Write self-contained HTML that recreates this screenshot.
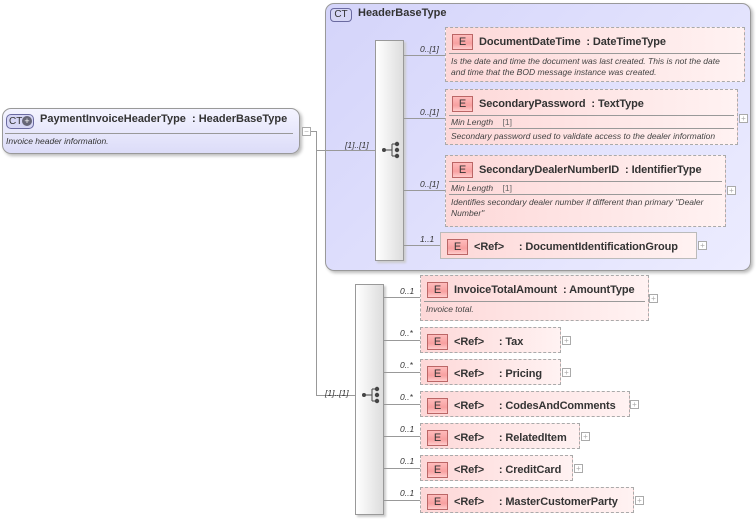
<!DOCTYPE html>
<html><head><meta charset="utf-8">
<style>
*{margin:0;padding:0;box-sizing:border-box}
body{width:756px;height:521px;background:#fff;position:relative;overflow:hidden;font-family:"Liberation Sans",Arial,sans-serif;color:#333}
.a{position:absolute}
.ln{position:absolute;background:#999}
.el{position:absolute;border:1px dashed #aaa;background:linear-gradient(to right,#fdd8d8,#fff2f2);}
.el.solid{border:1px solid #bbb}
.hd{position:absolute;left:6px;top:5px;height:17px;display:flex;align-items:center;font-weight:bold;font-size:11px;white-space:nowrap;letter-spacing:-0.1px}
.E{display:inline-block;width:21px;height:16px;border:1px solid #b66;background:linear-gradient(#fbb,#f7a0a0 60%,#fcc);font-weight:normal;font-size:11px;text-align:center;line-height:14px;margin-right:6px;color:#333}
.sep{position:absolute;left:3px;right:3px;height:1px;background:#999}
.doc{position:absolute;left:5px;font-style:italic;font-size:8.5px;line-height:11px;color:#444;white-space:nowrap}
.card{position:absolute;font-style:italic;font-size:8.5px;color:#333}
.plus{position:absolute;width:9px;height:9px;border:1px solid #aaa;background:#fff;font-size:8px;line-height:7px;text-align:center;color:#aaa}
.seq{position:absolute;border:1px solid #999;background:linear-gradient(to right,#fff,#ddd);box-shadow:2px 2px 2px #ccc}
</style></head><body>

<!-- main CT box -->
<div class="a" style="left:2px;top:108px;width:298px;height:46px;border:1px solid #999;border-radius:9px;background:linear-gradient(#f4f4ff,#dcdcf8);box-shadow:2px 2px 3px #bbb"></div>
<div class="a" style="left:6px;top:114px;width:28px;height:15px;border:1px solid #6a6aa0;border-radius:5px;background:#d6d6f5;font-size:10px;line-height:13px;padding-left:2px;color:#333;white-space:nowrap">CT<span style="position:absolute;left:15px;top:1px;width:10px;height:10px;border-radius:5px;background:#667;color:#fff;font-size:9px;line-height:10px;text-align:center">+</span></div>
<div class="a" style="left:40px;top:113px;font-weight:bold;font-size:11px;white-space:nowrap">PaymentInvoiceHeaderType&nbsp; : HeaderBaseType</div>
<div class="a" style="left:5px;top:133px;width:288px;height:1px;background:#999"></div>
<div class="a" style="left:6px;top:136px;font-style:italic;font-size:8.5px;color:#333">Invoice header information.</div>
<div class="plus" style="left:302px;top:127px">−</div>
<div class="ln" style="left:311px;top:131px;width:5px;height:1px"></div>
<div class="ln" style="left:316px;top:131px;width:1px;height:265px"></div>
<div class="ln" style="left:316px;top:395px;width:39px;height:1px"></div>
<div class="card" style="left:325px;top:388px">[1]..[1]</div>

<!-- HeaderBaseType -->
<div class="a" style="left:325px;top:3px;width:426px;height:268px;border:1px solid #999;border-radius:9px;background:linear-gradient(135deg,#d4d4fa,#ececff);box-shadow:2px 2px 3px #bbb"></div>
<div class="ln" style="left:316px;top:150px;width:59px;height:1px"></div>
<div class="card" style="left:345px;top:140px">[1]..[1]</div>
<div class="a" style="left:330px;top:8px;width:22px;height:14px;border:1px solid #6a6aa0;border-radius:4px;background:#d6d6f5;font-size:10px;line-height:12px;text-align:center">CT</div>
<div class="a" style="left:358px;top:7px;font-weight:bold;font-size:11px">HeaderBaseType</div>

<div class="seq" style="left:375px;top:40px;width:29px;height:221px"></div>
<svg class="a" style="left:380px;top:140px" width="22" height="22"><line x1="4" y1="10" x2="12" y2="10" stroke="#444"/><line x1="12" y1="4" x2="12" y2="16" stroke="#444"/><line x1="12" y1="4" x2="17" y2="4" stroke="#444"/><line x1="12" y1="16" x2="17" y2="16" stroke="#444"/><circle cx="4" cy="10" r="2" fill="#444"/><circle cx="17" cy="4" r="2.2" fill="#444"/><circle cx="17" cy="10" r="2.2" fill="#444"/><circle cx="17" cy="16" r="2.2" fill="#444"/></svg>

<div class="ln" style="left:404px;top:55px;width:41px;height:1px"></div>
<div class="card" style="left:420px;top:44px">0..[1]</div>
<div class="el" style="left:445px;top:27px;width:300px;height:55px"><div class="hd"><span class="E">E</span>DocumentDateTime&nbsp; : DateTimeType</div><div class="sep" style="top:25px"></div><div class="doc" style="top:28px">Is the date and time the document was last created. This is not the date<br>and time that the BOD message instance was created.</div></div>

<div class="ln" style="left:404px;top:118px;width:41px;height:1px"></div>
<div class="card" style="left:420px;top:107px">0..[1]</div>
<div class="el" style="left:445px;top:89px;width:293px;height:56px"><div class="hd"><span class="E">E</span>SecondaryPassword&nbsp; : TextType</div><div class="sep" style="top:25px"></div><div class="doc" style="top:27px">Min Length &nbsp;&nbsp;&nbsp;<span style="font-style:normal;color:#666">[1]</span></div><div class="sep" style="top:38px"></div><div class="doc" style="top:41px">Secondary password used to validate access to the dealer information</div></div>
<div class="plus" style="left:739px;top:114px">+</div>

<div class="ln" style="left:404px;top:190px;width:41px;height:1px"></div>
<div class="card" style="left:420px;top:179px">0..[1]</div>
<div class="el" style="left:445px;top:155px;width:281px;height:72px"><div class="hd"><span class="E">E</span>SecondaryDealerNumberID&nbsp; : IdentifierType</div><div class="sep" style="top:25px"></div><div class="doc" style="top:27px">Min Length &nbsp;&nbsp;&nbsp;<span style="font-style:normal;color:#666">[1]</span></div><div class="sep" style="top:38px"></div><div class="doc" style="top:41px">Identifies secondary dealer number if different than primary "Dealer<br>Number"</div></div>
<div class="plus" style="left:727px;top:186px">+</div>

<div class="ln" style="left:404px;top:245px;width:36px;height:1px"></div>
<div class="card" style="left:420px;top:234px">1..1</div>
<div class="el solid" style="left:440px;top:232px;width:257px;height:27px"><div class="hd"><span class="E">E</span>&lt;Ref&gt;&nbsp;&nbsp;&nbsp;&nbsp; : DocumentIdentificationGroup</div></div>
<div class="plus" style="left:698px;top:241px">+</div>

<!-- second sequence -->
<div class="seq" style="left:355px;top:284px;width:29px;height:231px"></div>
<svg class="a" style="left:360px;top:385px" width="22" height="22"><line x1="4" y1="10" x2="12" y2="10" stroke="#444"/><line x1="12" y1="4" x2="12" y2="16" stroke="#444"/><line x1="12" y1="4" x2="17" y2="4" stroke="#444"/><line x1="12" y1="16" x2="17" y2="16" stroke="#444"/><circle cx="4" cy="10" r="2" fill="#444"/><circle cx="17" cy="4" r="2.2" fill="#444"/><circle cx="17" cy="10" r="2.2" fill="#444"/><circle cx="17" cy="16" r="2.2" fill="#444"/></svg>

<div class="ln" style="left:384px;top:297px;width:36px;height:1px"></div>
<div class="card" style="left:400px;top:286px">0..1</div>
<div class="el" style="left:420px;top:275px;width:229px;height:46px"><div class="hd"><span class="E">E</span>InvoiceTotalAmount&nbsp; : AmountType</div><div class="sep" style="top:25px"></div><div class="doc" style="top:28px">Invoice total.</div></div>
<div class="plus" style="left:649px;top:294px">+</div>

<div class="ln" style="left:384px;top:340px;width:36px;height:1px"></div>
<div class="card" style="left:400px;top:328px">0..*</div>
<div class="el" style="left:420px;top:327px;width:141px;height:26px"><div class="hd"><span class="E">E</span>&lt;Ref&gt;&nbsp;&nbsp;&nbsp;&nbsp; : Tax</div></div>
<div class="plus" style="left:562px;top:336px">+</div>

<div class="ln" style="left:384px;top:372px;width:36px;height:1px"></div>
<div class="card" style="left:400px;top:360px">0..*</div>
<div class="el" style="left:420px;top:359px;width:141px;height:26px"><div class="hd"><span class="E">E</span>&lt;Ref&gt;&nbsp;&nbsp;&nbsp;&nbsp; : Pricing</div></div>
<div class="plus" style="left:562px;top:368px">+</div>

<div class="ln" style="left:384px;top:404px;width:36px;height:1px"></div>
<div class="card" style="left:400px;top:392px">0..*</div>
<div class="el" style="left:420px;top:391px;width:210px;height:26px"><div class="hd"><span class="E">E</span>&lt;Ref&gt;&nbsp;&nbsp;&nbsp;&nbsp; : CodesAndComments</div></div>
<div class="plus" style="left:630px;top:400px">+</div>

<div class="ln" style="left:384px;top:436px;width:36px;height:1px"></div>
<div class="card" style="left:400px;top:424px">0..1</div>
<div class="el" style="left:420px;top:423px;width:160px;height:26px"><div class="hd"><span class="E">E</span>&lt;Ref&gt;&nbsp;&nbsp;&nbsp;&nbsp; : RelatedItem</div></div>
<div class="plus" style="left:581px;top:432px">+</div>

<div class="ln" style="left:384px;top:468px;width:36px;height:1px"></div>
<div class="card" style="left:400px;top:456px">0..1</div>
<div class="el" style="left:420px;top:455px;width:153px;height:26px"><div class="hd"><span class="E">E</span>&lt;Ref&gt;&nbsp;&nbsp;&nbsp;&nbsp; : CreditCard</div></div>
<div class="plus" style="left:574px;top:464px">+</div>

<div class="ln" style="left:384px;top:500px;width:36px;height:1px"></div>
<div class="card" style="left:400px;top:488px">0..1</div>
<div class="el" style="left:420px;top:487px;width:214px;height:26px"><div class="hd"><span class="E">E</span>&lt;Ref&gt;&nbsp;&nbsp;&nbsp;&nbsp; : MasterCustomerParty</div></div>
<div class="plus" style="left:635px;top:496px">+</div>

</body></html>
